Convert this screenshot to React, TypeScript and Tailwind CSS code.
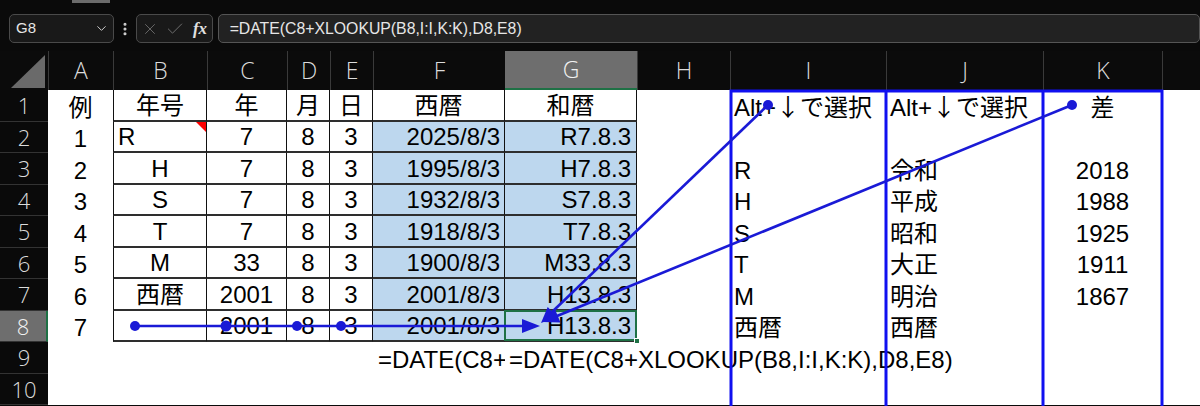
import type { ReactNode } from "react";
import { ChevronDown, EllipsisVertical, X, Check } from "lucide-react";

// column widths: row header, A..K, and the sliver of L
const GRID =
  "grid grid-cols-[48px_65px_94px_80px_43px_43px_132px_132px_93px_156px_157px_119px_38px]";

const LETTERS = ["A", "B", "C", "D", "E", "F", "G", "H", "I", "J", "K", ""];

const ALIGN = [
  "justify-center",
  "justify-center",
  "justify-center",
  "justify-center",
  "justify-center",
  "justify-end pr-[4px]",
  "justify-end pr-[5px]",
  "justify-start pl-[4px]",
  "justify-start pl-[4px]",
  "justify-start pl-[4px]",
  "justify-center",
  "justify-start",
];

const FORMULA = "=DATE(C8+XLOOKUP(B8,I:I,K:K),D8,E8)";

const arrow = (
  <span>
    Alt+<span className="font-['Noto_Sans_CJK_JP']">↓で選択</span>
  </span>
);

const ROWS: ReactNode[][] = [
  ["例", "年号", "年", "月", "日", "西暦", "和暦", "", arrow, arrow, "差", ""],
  ["1", "R", "7", "8", "3", "2025/8/3", "R7.8.3", "", "", "", "", ""],
  ["2", "H", "7", "8", "3", "1995/8/3", "H7.8.3", "", "R", "令和", "2018", ""],
  ["3", "S", "7", "8", "3", "1932/8/3", "S7.8.3", "", "H", "平成", "1988", ""],
  ["4", "T", "7", "8", "3", "1918/8/3", "T7.8.3", "", "S", "昭和", "1925", ""],
  ["5", "M", "33", "8", "3", "1900/8/3", "M33.8.3", "", "T", "大正", "1911", ""],
  ["6", "西暦", "2001", "8", "3", "2001/8/3", "H13.8.3", "", "M", "明治", "1867", ""],
  ["7", "", "2001", "8", "3", "2001/8/3", "H13.8.3", "", "西暦", "西暦", "", ""],
  ["", "", "", "", "", FORMULA, FORMULA, "", "", "", "", ""],
  ["", "", "", "", "", "", "", "", "", "", "", ""],
];

function cellClass(r: number, c: number) {
  const parts = ["flex items-end pb-[2px] whitespace-nowrap", ALIGN[c]];
  if (r === 1 && c === 1) parts[1] = "justify-start pl-[4px] relative";
  if (r === 0 && (c === 5 || c === 6)) parts[1] = "justify-center";
  // formula text spilling out of F9 / G9
  if (r === 8 && c === 5) parts[1] = "justify-start pl-[5px] overflow-hidden";
  if (r === 8 && c === 6) parts[1] = "justify-start pl-[4px] overflow-visible";
  const inTable = r <= 7 && c >= 1 && c <= 6;
  if (inTable) parts.push("border-r border-b-2 border-r-[#111] border-b-[#2e2e2e]");
  if (inTable && c === 1) parts.push("border-l border-l-[#111]");
  if (r >= 1 && r <= 7 && (c === 5 || c === 6)) parts.push("bg-[#bdd7ee]");
  if (r === 7 && c === 6) parts.push("relative");
  return parts.join(" ");
}

function FormulaBar() {
  return (
    <div className="h-[51px] overflow-hidden">
      <div className="ml-[72px] h-[3px] w-[38px] bg-[#6b6b6b]" />
      <div className="mt-[11px] flex items-center text-[#e6e6e6] font-['Liberation_Sans',sans-serif]">
        <div className="ml-[9px] flex h-[29px] w-[107px] items-center justify-between rounded-[5px] border border-[#4a4a4a] bg-[#191919] pl-[6px] pr-[4px] text-[15px]">
          <span>G8</span>
          <ChevronDown size={15} strokeWidth={1.6} className="text-[#cfcfcf]" />
        </div>
        <div className="flex w-[22px] justify-center">
          <EllipsisVertical size={16} strokeWidth={2.6} className="text-[#d0d0d0]" />
        </div>
        <div className="flex h-[29px] w-[78px] items-center rounded-[5px] border border-[#4a4a4a] bg-[#191919] pl-[4px]">
          <X size={18} strokeWidth={1.2} className="text-[#6e6e6e]" />
          <Check size={20} strokeWidth={1.2} className="ml-[6px] text-[#6e6e6e]" />
          <span className="ml-[8px] font-['Liberation_Serif',serif] text-[17px] font-bold italic text-[#e0e0e0]">
            fx
          </span>
        </div>
        <div className="ml-[5px] flex h-[29px] w-[1000px] items-center rounded-[5px] border border-[#555] bg-[#222] pl-[11px] text-[15.8px]">
          {FORMULA}
        </div>
      </div>
    </div>
  );
}

function ColumnHeaders() {
  return (
    <div className={`${GRID} h-[39px] bg-[#0b0b0b] font-['Open_Sans',sans-serif] text-[23px] font-light text-[#dcdcdc]`}>
      <div className="flex items-end justify-end pb-[2px] pr-[3px]">
        <svg width="34" height="33" viewBox="0 0 34 33">
          <polygon points="0,33 34,33 34,0" fill="#6a6a6a" />
        </svg>
      </div>
      {LETTERS.map((l, i) => (
        <div
          key={i}
          className={
            l === "G"
              ? "flex items-center justify-center border-b-2 border-b-[#1e7145] bg-[#6e6e6e] text-[#f2f2f2]"
              : "flex items-center justify-center border-l border-l-[#3a3a3a]"
          }
        >
          {l}
        </div>
      ))}
    </div>
  );
}

function Annotations() {
  return (
    <svg className="pointer-events-none absolute left-0 top-0" width="1200" height="406">
      <path d="M731 406V91H886V406M886 91H1043V406M1043 91H1162V406" stroke="#1010f0" strokeWidth="3" fill="none" />
      <g stroke="#1a1ad6" strokeWidth="2.6">
        <line x1="135" y1="326" x2="524" y2="326" />
        <line x1="768" y1="105" x2="552" y2="312" />
        <line x1="1072" y1="105" x2="557" y2="316" />
      </g>
      <g fill="#1a1ad6">
        <polygon points="540,326 522,319 522,333" />
        <polygon points="541,323 557.4,317 547.7,306.9" />
        <polygon points="543,322 560.5,322.4 555.1,309.5" />
        <circle cx="135" cy="326" r="5" />
        <circle cx="226" cy="326" r="5.5" />
        <circle cx="297" cy="326" r="5" />
        <circle cx="341" cy="326" r="5" />
        <circle cx="768" cy="105" r="5" />
        <circle cx="1072" cy="105" r="5" />
      </g>
    </svg>
  );
}

export default function App() {
  return (
    <div className="relative h-[406px] w-[1200px] overflow-hidden bg-[#0a0a0a]">
      <FormulaBar />
      <ColumnHeaders />
      <div className="bg-white font-['Liberation_Sans','Noto_Sans_CJK_JP',sans-serif] text-[24px] leading-[24px] text-black">
        {ROWS.map((row, r) => (
          <div key={r} className={`${GRID} h-[31.5px]`}>
            <div
              className={
                r === 7
                  ? "flex items-center justify-center border-b border-r-2 border-b-[#333] border-r-[#1e7145] bg-[#6e6e6e] font-['Open_Sans',sans-serif] text-[22px] font-light text-[#f2f2f2]"
                  : "flex items-center justify-center border-b border-b-[#333] bg-[#0a0a0a] font-['Open_Sans',sans-serif] text-[22px] font-light text-[#dcdcdc]"
              }
            >
              {r + 1}
            </div>
            {row.map((v, c) => (
              <div key={c} className={cellClass(r, c)}>
                {v}
                {r === 1 && c === 1 && (
                  <span className="absolute right-0 top-0 h-0 w-0 border-l-[10px] border-t-[10px] border-l-transparent border-t-[#ff0000]" />
                )}
                {r === 7 && c === 6 && (
                  <>
                    <span className="pointer-events-none absolute inset-[-1px] border-2 border-[#1e7145]" />
                    <span className="absolute bottom-[-4px] right-[-4px] h-[6px] w-[6px] border border-white bg-[#1e7145]" />
                  </>
                )}
              </div>
            ))}
          </div>
        ))}
      </div>
      <Annotations />
    </div>
  );
}
